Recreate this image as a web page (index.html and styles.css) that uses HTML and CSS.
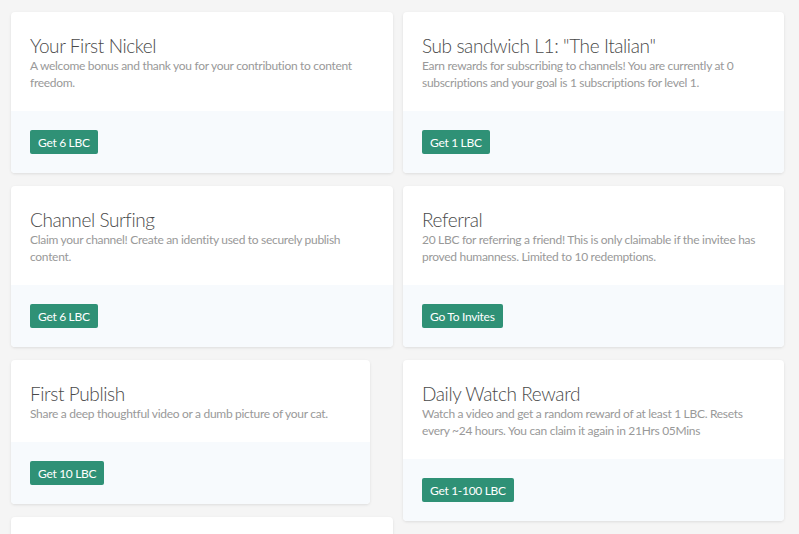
FILE: index.html
```html
<!DOCTYPE html>
<html lang="en">
<head>
  <meta charset="UTF-8">
  <title>Rewards</title>
  <link rel="stylesheet" href="styles.css">
</head>
<body>
  <div class="rewards">
    <div class="column">
      <div class="card">
        <div class="card-body">
          <h2 class="card-title">Your First Nickel</h2>
          <p class="card-text">A welcome bonus and thank you for your contribution to content freedom.</p>
        </div>
        <div class="card-actions">
          <button class="btn">Get 6 LBC</button>
        </div>
      </div>
      <div class="card">
        <div class="card-body">
          <h2 class="card-title">Channel Surfing</h2>
          <p class="card-text">Claim your channel! Create an identity used to securely publish content.</p>
        </div>
        <div class="card-actions">
          <button class="btn">Get 6 LBC</button>
        </div>
      </div>
      <div class="card card-narrow">
        <div class="card-body">
          <h2 class="card-title">First Publish</h2>
          <p class="card-text">Share a deep thoughtful video or a dumb picture of your cat.</p>
        </div>
        <div class="card-actions">
          <button class="btn">Get 10 LBC</button>
        </div>
      </div>
      <div class="card">
        <div class="card-body">
          <h2 class="card-title">First Subscription</h2>
          <p class="card-text">Subscribe to a channel to get updates on new content.</p>
        </div>
        <div class="card-actions">
          <button class="btn">Get 1 LBC</button>
        </div>
      </div>
    </div>
    <div class="column">
      <div class="card">
        <div class="card-body">
          <h2 class="card-title">Sub sandwich L1: "The Italian"</h2>
          <p class="card-text">Earn rewards for subscribing to channels! You are currently at 0 subscriptions and your goal is 1 subscriptions for level 1.</p>
        </div>
        <div class="card-actions">
          <button class="btn">Get 1 LBC</button>
        </div>
      </div>
      <div class="card">
        <div class="card-body">
          <h2 class="card-title">Referral</h2>
          <p class="card-text">20 LBC for referring a friend! This is only claimable if the invitee has proved humanness. Limited to 10 redemptions.</p>
        </div>
        <div class="card-actions">
          <button class="btn">Go To Invites</button>
        </div>
      </div>
      <div class="card">
        <div class="card-body">
          <h2 class="card-title">Daily Watch Reward</h2>
          <p class="card-text">Watch a video and get a random reward of at least 1 LBC. Resets every ~24 hours. You can claim it again in 21Hrs 05Mins</p>
        </div>
        <div class="card-actions">
          <button class="btn">Get 1-100 LBC</button>
        </div>
      </div>
    </div>
  </div>
</body>
</html>
```

FILE: styles.css
```css
body {
  margin: 0;
  background: #f5f5f5;
  font-family: 'Lato', sans-serif;
  overflow: hidden;
}
.rewards {
  display: flex;
  align-items: flex-start;
  gap: 10px;
  padding: 12px 11px;
}
.column {
  display: flex;
  flex-direction: column;
  align-items: flex-start;
  gap: 13px;
}
.column:first-child {
  width: 382px;
}
.column:last-child {
  width: 381px;
}
.card {
  width: 100%;
  background: #fff;
  border-radius: 4px;
  box-shadow: 0 1px 3px rgba(0, 0, 0, 0.1);
  overflow: hidden;
}
.card-narrow {
  width: 359px;
}
.card-body {
  padding: 22px 19px 20px;
}
.card-title {
  margin: 0;
  font-size: 19px;
  line-height: 23px;
  font-weight: 300;
  letter-spacing: -0.4px;
  color: #4a4a4a;
}
.card-text {
  margin: 0;
  font-size: 12px;
  line-height: 17px;
  letter-spacing: -0.3px;
  color: #999;
}
.card-actions {
  background: #f7fafd;
  padding: 19px;
}
.btn {
  height: 24px;
  padding: 0 8px;
  border: none;
  border-radius: 2px;
  background: #2f9176;
  color: #fff;
  font-family: inherit;
  font-size: 12px;
  letter-spacing: -0.3px;
  cursor: pointer;
}
```
